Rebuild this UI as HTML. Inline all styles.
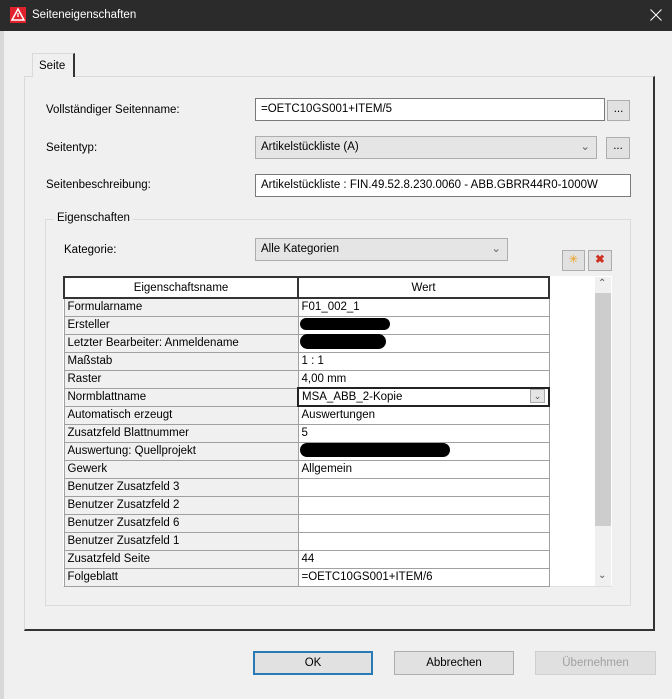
<!DOCTYPE html>
<html><head><meta charset="utf-8"><style>
*{box-sizing:border-box;margin:0;padding:0}
body{width:672px;height:699px;background:#f0f0f0;font-family:"Liberation Sans",sans-serif;font-size:11.5px;color:#000;position:relative;overflow:hidden}
.a{position:absolute}
.inp{position:absolute;background:#fff;border:1px solid #7a7a7a;padding:4px 5px;white-space:nowrap}
.btn{position:absolute;background:#e1e1e1;border:1px solid #adadad;text-align:center}
table{border-collapse:collapse;position:absolute;left:63px;top:276px;width:485px;table-layout:fixed}
td{height:18px;border:1px solid #a0a0a0;padding:0 3px;white-space:nowrap;overflow:hidden;font-size:11.5px;line-height:16px}
td.l{background:#f0f0f0}
td.r{background:#fff}
th{height:21px;border:2px solid #333;font-weight:normal;background:#fff;font-size:11.5px}
.blot{position:absolute;background:#000;border-radius:8px}
</style></head><body>
<div class="a" style="left:0;top:0;width:672px;height:31px;background:#2b2b2b"></div>
<svg class="a" style="left:10px;top:7px" width="16" height="16"><rect width="16" height="16" fill="#e0202a"/><path d="M8 2 L14 13 H2 Z" fill="none" stroke="#fff" stroke-width="1.5"/><path d="M8 6v4" stroke="#fff" stroke-width="1.3"/></svg>
<div class="a" style="left:32px;top:9px;color:#fff;font-size:11.5px">Seiteneigenschaften</div>
<svg class="a" style="left:650px;top:9px" width="12" height="12"><path d="M0.5 0.5L11.5 11.5M11.5 0.5L0.5 11.5" stroke="#fff" stroke-width="1"/></svg>
<div class="a" style="left:0;top:31px;width:4px;height:668px;background:#d8d8d8"></div>
<div class="a" style="left:24px;top:76px;width:631px;height:555px;border:1px solid #d9d9d9;border-right:2px solid #333;border-bottom:2px solid #333;background:#f0f0f0"></div>
<div class="a" style="left:32px;top:53px;width:43px;height:24px;border:1px solid #d9d9d9;border-right:2px solid #333;border-bottom:none;background:#f0f0f0;padding:6px 0 0 6px">Seite</div>
<div class="a" style="left:46px;top:104px">Vollständiger Seitenname:</div>
<div class="inp" style="left:255px;top:98px;width:350px;height:23px">=OETC10GS001+ITEM/5</div>
<div class="btn" style="left:607px;top:100px;width:23px;height:21px;line-height:16px">...</div>
<div class="a" style="left:46px;top:142px">Seitentyp:</div>
<div class="inp" style="left:255px;top:136px;width:342px;height:23px;background:#e5e5e5;border-color:#adadad">Artikelstückliste (A)<span style="position:absolute;right:6px;top:2px;color:#666">⌄</span></div>
<div class="btn" style="left:606px;top:137px;width:24px;height:22px;line-height:16px">...</div>
<div class="a" style="left:46px;top:179px">Seitenbeschreibung:</div>
<div class="inp" style="left:255px;top:174px;width:376px;height:23px">Artikelstückliste : FIN.49.52.8.230.0060 - ABB.GBRR44R0-1000W</div>
<div class="a" style="left:45px;top:219px;width:586px;height:387px;border:1px solid #dcdcdc"></div>
<div class="a" style="left:54px;top:212px;background:#f0f0f0;padding:0 3px">Eigenschaften</div>
<div class="a" style="left:64px;top:244px">Kategorie:</div>
<div class="inp" style="left:255px;top:238px;width:253px;height:23px;background:#e5e5e5;border-color:#adadad">Alle Kategorien<span style="position:absolute;right:6px;top:2px;color:#666">⌄</span></div>
<div class="btn" style="left:562px;top:250px;width:23px;height:21px;color:#f0a020;line-height:18px">✳</div>
<div class="btn" style="left:588px;top:250px;width:24px;height:21px;color:#d03020;font-weight:bold;line-height:18px">✖</div>
<div class="a" style="left:63px;top:276px;width:549px;height:311px;background:#fff;border-bottom:1px solid #e0e0e0"></div>
<div class="a" style="left:595px;top:277px;width:16px;height:309px;background:#f0f0f0"></div>
<div class="a" style="left:595px;top:293px;width:16px;height:233px;background:#cdcdcd"></div>
<div class="a" style="left:598px;top:278px;font-size:10px;color:#555">⌃</div>
<div class="a" style="left:598px;top:570px;font-size:10px;color:#555">⌄</div>
<table>
<colgroup><col style="width:234px"><col style="width:251px"></colgroup>
<tr><th>Eigenschaftsname</th><th>Wert</th></tr>
<tr><td class="l">Formularname</td><td class="r">F01_002_1</td></tr>
<tr><td class="l">Ersteller</td><td class="r"></td></tr>
<tr><td class="l">Letzter Bearbeiter: Anmeldename</td><td class="r"></td></tr>
<tr><td class="l">Maßstab</td><td class="r">1 : 1</td></tr>
<tr><td class="l">Raster</td><td class="r">4,00 mm</td></tr>
<tr><td class="l">Normblattname</td><td class="r" style="border:2px solid #222">MSA_ABB_2-Kopie<span style="float:right;width:15px;height:14px;background:#e5e5e5;border:1px solid #aaa;font-size:9px;text-align:center;line-height:12px;color:#555">⌄</span></td></tr>
<tr><td class="l">Automatisch erzeugt</td><td class="r">Auswertungen</td></tr>
<tr><td class="l">Zusatzfeld Blattnummer</td><td class="r">5</td></tr>
<tr><td class="l">Auswertung: Quellprojekt</td><td class="r"></td></tr>
<tr><td class="l">Gewerk</td><td class="r">Allgemein</td></tr>
<tr><td class="l">Benutzer Zusatzfeld 3</td><td class="r"></td></tr>
<tr><td class="l">Benutzer Zusatzfeld 2</td><td class="r"></td></tr>
<tr><td class="l">Benutzer Zusatzfeld 6</td><td class="r"></td></tr>
<tr><td class="l">Benutzer Zusatzfeld 1</td><td class="r"></td></tr>
<tr><td class="l">Zusatzfeld Seite</td><td class="r">44</td></tr>
<tr><td class="l">Folgeblatt</td><td class="r">=OETC10GS001+ITEM/6</td></tr>
</table>
<div class="blot" style="left:300px;top:318px;width:90px;height:12px"></div>
<div class="blot" style="left:300px;top:334px;width:86px;height:15px"></div>
<div class="blot" style="left:300px;top:443px;width:150px;height:14px"></div>
<div class="btn" style="left:253px;top:651px;width:120px;height:24px;border:2px solid #2a7ab5;line-height:20px">OK</div>
<div class="btn" style="left:394px;top:651px;width:120px;height:24px;line-height:22px">Abbrechen</div>
<div class="btn" style="left:535px;top:651px;width:121px;height:24px;line-height:22px;color:#a0a0a0;background:#e0e0e0;border-color:#cfcfcf">Übernehmen</div>
</body></html>
